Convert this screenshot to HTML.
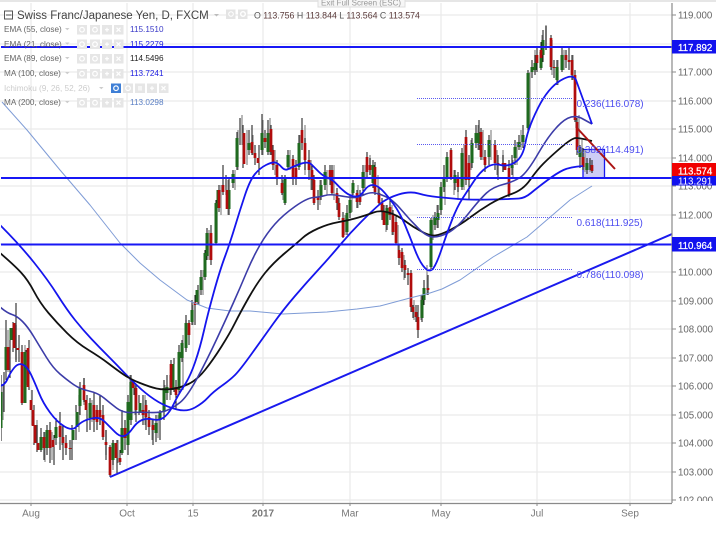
<!DOCTYPE html>
<html><head><meta charset="utf-8"><style>
html,body{margin:0;padding:0;background:#fff;width:725px;height:543px;overflow:hidden}
svg{display:block;font-family:"Liberation Sans",Arial,sans-serif;filter:blur(.3px)}
</style></head><body>
<svg width="725" height="543" viewBox="0 0 725 543">
<defs><clipPath id="c"><rect x="1" y="3" width="671" height="500"/></clipPath>
<clipPath id="a"><rect x="672" y="3" width="46" height="498"/></clipPath></defs>
<rect width="725" height="543" fill="#fff"/>
<rect x="0" y="0" width="716" height="2" fill="#e6e6e6"/>
<path d="M0 15H672M0 44H672M0 72H672M0 101H672M0 129H672M0 158H672M0 186H672M0 215H672M0 244H672M0 272H672M0 301H672M0 329H672M0 358H672M0 386H672M0 415H672M0 443H672M0 472H672M0 500H672M31 3V503M127 3V503M193 3V503M263 3V503M350 3V503M441 3V503M537 3V503M630 3V503" stroke="#eaeaea" stroke-width="1.3" fill="none"/>
<rect x="583" y="149.5" width="21.5" height="28.500" fill="#cdcdf5" stroke="#1a1aee" stroke-width="1.3"/>
<g clip-path="url(#c)">
<path fill="none" stroke="#999" stroke-width="1.4" d="M3 385V420M8 330V372M16 325V360M25 345V395M27 350V385M37 420V450M45 432V462M52 432V460M62 425V445M79 395V432M84 378V405M92 400V422M100 395V425M106 430V455M113 440V470M118 440V463M130 375V420M135 385V415M145 395V425M152 420V440M158 415V438M165 385V410M170 375V400M183 335V390M186 320V350M193 305V325M199 290V305M203 270V295M209 230V260M217 200V240M221 185V215M228 180V215M235 170V190M238 130V170M242 115V145M247 130V165M253 135V155M263 120V155M270 118V155M275 150V175M283 180V200M290 150V170M300 135V165M305 125V175M311 160V190M320 180V205M327 170V195M334 165V200M345 215V235M352 190V212M358 185V208M365 165V190M370 155V175M378 175V195M386 205V232M392 205V235M398 225V250M404 255V280M414 300V320M421 295V320M427 265V295M433 215V240M437 205V228M445 180V205M454 170V195M458 175V200M464 145V190M471 140V170M478 125V150M483 130V160M491 130V160M497 150V175M503 150V172M513 160V178M517 142V165M521 130V150M530 72V128M535 50V72M542 35V60M546 25V50M552 40V75M558 60V85M564 50V70M573 55V80M576 118V128M579 115V155M582 140V165M585 150V172M590 160V172"/>
<path fill="none" stroke="#111" stroke-width="1" d="M1 375V441M4 372V412M6 320V380M10 330V378M13 322V352M16 303V362M19 335V362M22 345V405M26 350V392M29 340V390M32 390V425M34 405V445M37 425V452M41 428V452M44 432V460M47 425V455M50 422V463M54 435V465M56 418V445M60 412V450M63 425V460M66 435V455M70 440V460M72 425V460M76 405V440M80 382V415M84 378V402M87 395V432M90 398V430M94 392V432M97 405V430M100 395V425M103 405V440M106 430V460M110 445V477M113 440V465M117 440V473M120 450V465M122 410V455M125 420V450M128 395V455M131 375V425M134 380V395M136 385V422M139 395V415M143 395V425M146 400V430M149 410V435M153 420V445M156 415V442M160 410V440M164 380V420M167 375V400M171 360V395M174 358V392M176 380V410M179 345V395M182 340V362M186 315V352M189 320V345M192 300V325M195 295V325M198 285V305M201 270V295M205 250V280M207 228V260M211 225V265M216 200V245M219 185V212M223 165V195M226 175V195M229 178V215M233 170V188M237 132V170M240 118V145M243 125V168M249 130V155M252 125V155M255 145V165M259 145V175M262 114V155M265 130V148M268 120V155M271 125V155M273 145V170M277 160V185M282 175V195M285 175V205M288 150V170M293 155V185M296 160V185M299 135V170M302 118V150M305 138V170M309 150V180M312 165V190M314 175V205M318 190V210M321 180V200M325 165V190M330 165V185M332 165V195M337 188V210M339 198V220M343 212V238M347 205V235M350 195V218M353 180V195M357 190V208M360 190V205M363 165V195M367 152V178M370 158V175M373 160V188M375 162V195M379 188V205M382 198V220M384 205V225M387 205V230M390 200V220M393 210V235M396 215V245M399 245V265M402 248V272M405 260V278M408 268V285M411 270V312M413 305V318M416 305V322M418 305V338M422 295V322M424 280V305M428 275V295M431 218V270M435 212V230M438 205V228M441 182V215M444 165V192M447 152V182M451 148V180M455 170V190M458 172V192M462 148V190M466 130V185M469 155V200M472 138V168M476 125V148M479 120V150M481 128V160M485 150V172M489 135V165M495 140V170M498 155V180M503 155V172M509 160V197M512 155V175M515 140V165M519 135V150M523 125V148M528 70V132M532 60V78M535 55V75M537 48V72M541 42V70M543 30V62M546 26V50M551 35V70M554 60V78M557 60V85M562 48V72M566 50V68M569 48V70M572 55V80M575 70V122M577 118V155M580 145V168M583 148V170M587 158V174M590 158V170M592 160V173"/>
<path fill="none" stroke="#1f6a1f" stroke-width="3" d="M1 392V428M6 347V370M11 328V340M25 352V403M41 437V450M47 430V448M56 427V438M73 430V440M77 412V427M80 388V406M90 403V418M113 443V460M122 428V453M128 402V445M131 382V420M140 403V412M156 423V433M160 412V420M164 388V412M167 387V393M173 364V390M179 352V390M182 343V358M186 323V348M192 310V322M197 290V302M201 277V290M205 253V277M207 233V256M216 203V243M218 190V208M229 190V209M233 174V183M237 138V167M249 143V150M262 133V150M268 133V152M285 178V203M288 155V167M299 143V167M321 185V197M325 172V185M347 213V232M350 200V213M353 183V193M363 172V188M373 165V183M387 208V225M422 300V318M424 288V300M431 220V267M435 217V225M438 213V220M441 187V210M444 178V187M447 157V178M455 175V183M462 153V187M472 143V163M476 133V143M479 133V143M489 140V157M512 165V168M515 147V158M519 142V147M523 135V142M528 73V128M532 67V72M535 63V70M541 52V68M543 40V55M557 67V80M562 55V70M580 150V157M587 163V170"/>
<path fill="none" stroke="#b00d0d" stroke-width="2.7" d="M8 347V370M14 323V348M18 348V350M22 352V403M28 348V387M31 400V410M33 410V426M35 425V443M38 443V450M44 437V448M50 430V448M53 440V447M60 426V437M63 437V443M66 443V448M70 448V449M84 385V400M86 400V410M94 405V420M97 410V422M100 410V417M103 415V437M106 442V445M110 447V475M116 443V458M120 458V462M125 428V438M133 382V388M136 388V410M143 410V415M146 405V417M149 417V427M153 425V430M171 364V390M176 387V395M189 323V335M195 302V305M211 233V260M219 190V208M223 185V192M227 190V209M244 133V164M252 142V153M255 153V158M258 158V163M265 138V142M271 129V152M273 150V165M277 165V177M282 183V193M293 159V178M296 168V178M302 130V143M305 143V160M309 160V170M312 170V180M314 180V203M318 197V200M330 170V178M332 170V193M337 193V203M339 203V217M343 218V237M357 193V202M360 197V202M367 157V172M370 165V170M375 167V192M379 193V203M382 203V212M384 212V225M390 207V215M393 215V232M396 222V243M399 250V258M402 252V268M405 265V270M408 273V275M411 273V307M413 307V312M416 312V317M418 317V330M428 288V290M451 150V177M458 178V187M466 137V180M469 163V180M481 132V157M485 157V165M495 145V163M498 163V165M503 163V165M505 163V170M509 168V195M537 55V63M541 50V58M551 38V67M554 67V68M566 55V60M569 60V62M572 60V75M575 75V120M577 122V150M583 157V167M592 165V171"/>
<g fill="none" stroke-linejoin="round">
<path stroke="#7f9cd6" stroke-width="1" d="M2 102L27 130L60 170L90 205L120 243L140 263L160 280L187 300L207 308L230 311L250 311L283 314L327 312L357 309L380 306L410 298L430 293L442 289L460 280L493 257L527 237L570 200L592 186"/>
<path stroke="#1515ee" stroke-width="1.8" d="M0 225Q20 245 34 262.5T57.5 295T75 320T91.5 339T108.5 356.5T125 373.5T141.5 389.5T158.5 402T177 409.5T195 407.5T208 397.5T221.5 386T235 375T251.5 354T273 324T295 296T318.5 269.5T340 245T361.5 221.5T380 204T398.5 194.5T418.5 193.5T437 197T458.5 199T491.500 199.5T519 198.5T531 193T547 180.5T563.5 170T583 166"/>
<path stroke="#111" stroke-width="1.8" d="M0 253Q14 265 21 272.5T34 291.5T48.5 313T67 333T88.5 350T108.5 363.5T123.5 374.5T140 383T156.5 388.5T171.5 389T188.5 384T205 370T221.5 346.5T235 323T248.5 298T265 273T285 253T302.5 238T318 228.5T339 222T358.5 217.5T373.5 212.5T388.5 212.5T405 221T421.5 231.5T435 235.5T450 230T470 217.5T490 204T511.5 194T530 180T543.5 163.5T561 147.5T576 138T592 141"/>
<path stroke="#3c3ca8" stroke-width="1.6" d="M0 307Q7 313 12 314.5T22.5 321.5T34 337T46.5 357.5T60 374T73.5 384.5T89 391T104 398T116.5 408T131.5 412.5T150 412.5T166.5 410.5T180 402.5T197 378.5T217 338.5T233.5 302.5T246.5 272.5T260 245T275 224T295 206.5T313.5 197.5T325 195.5T338.5 195.5T352 197.5T363.5 195T375 193T386.5 197T401.5 210T418.5 228.5T433.5 237T448.5 232.5T468.5 213.5T486.5 193T503 184.5T520 177.5T538.5 153T561 123T582 118.5L592 124"/>
<path stroke="#1515ee" stroke-width="1.8" d="M0 386Q5 385 7.5 379T14 368T22.5 364.5T31 374.5T39 393T50 412.5T64.5 426.5T76 427T84 421T94 418T105 422T115 432T124 436T132.5 428.5T142 420T153.5 419.5T165 416.5T174 403.5T184 386T195 362.5T204 330.5T214 291.5T225 256.5T235 226.5T245 195T255 174T266 165T275 162.5T281.5 167T288.5 169T300 164T311.5 164.5T319 172T328 178T336.5 184T345 192T355 196.5T364 191T372.5 185T382 190T393.5 204T405 225T415 250T425 268T433.5 268T442 248T452 220T462.5 198.5T474 181T486.5 167.5T500.5 165T515.5 162T525.5 142.5T538 108T560.5 80.5T576 80L592 124"/>
<path stroke="#1a1aee" stroke-width="2" d="M110 477L672 234"/>
</g>
<path stroke="#1818f5" stroke-width="2" d="M0 47H672M0 178H672M0 244.5H672" fill="none"/>
<path stroke="#5a5af0" stroke-width="1" stroke-dasharray="1 1" d="M417 98.5H572M417 144.5H572M417 217.5H572M417 269.5H572" fill="none"/>
<path stroke="#ac1414" stroke-width="2" d="M577 128L615 169" fill="none"/>
</g>
<g font-size="10" fill="#4d4df0">
<text x="576.5" y="107">0.236(116.078)</text>
<text x="576.5" y="153">0.382(114.491)</text>
<text x="576.5" y="226">0.618(111.925)</text>
<text x="576.5" y="278">0.786(110.098)</text>
</g>
<path d="M672 3V503M0 503.5H672" stroke="#8a8a8a" stroke-width="1.2" fill="none"/>
<path d="M672 15h4M672 44h4M672 72h4M672 101h4M672 129h4M672 158h4M672 186h4M672 215h4M672 244h4M672 272h4M672 301h4M672 329h4M672 358h4M672 386h4M672 415h4M672 443h4M672 472h4M672 500h4M31 503v3M127 503v3M193 503v3M263 503v3M350 503v3M441 503v3M537 503v3M630 503v3" stroke="#8a8a8a" fill="none"/>
<g font-size="9.7" fill="#666" clip-path="url(#a)">
<text x="678" y="18.5">119.000</text><text x="678" y="75.5">117.000</text><text x="678" y="104.5">116.000</text><text x="678" y="132.5">115.000</text><text x="678" y="161.5">114.000</text><text x="678" y="189.5">113.000</text><text x="678" y="218.5">112.000</text><text x="678" y="275.5">110.000</text><text x="678" y="304.5">109.000</text><text x="678" y="332.5">108.000</text><text x="678" y="361.5">107.000</text><text x="678" y="389.5">106.000</text><text x="678" y="418.5">105.000</text><text x="678" y="446.5">104.000</text><text x="678" y="475.5">103.000</text><text x="678" y="503.5">102.000</text>
</g>
<rect x="672" y="40" width="44" height="13.5" fill="#1212ee"/><text x="678" y="51" font-size="9.7" fill="#fff" stroke="#fff" stroke-width=".25">117.892</text>
<rect x="672" y="173" width="44" height="12.5" fill="#1212ee"/><text x="678" y="184.5" font-size="9.7" fill="#fff">113.291</text>
<rect x="672" y="163" width="44" height="13" fill="#f00000"/><text x="678" y="174.5" font-size="9.7" fill="#fff" stroke="#fff" stroke-width=".25">113.574</text>
<rect x="672" y="237" width="44" height="14.5" fill="#1212ee"/><text x="678" y="249" font-size="9.7" fill="#fff" stroke="#fff" stroke-width=".25">110.964</text>
<g font-size="10" fill="#777" text-anchor="middle">
<text x="31" y="516.5">Aug</text><text x="127" y="516.5">Oct</text><text x="193" y="516.5">15</text><text x="263" y="516.5" font-weight="700">2017</text><text x="350" y="516.5">Mar</text><text x="441" y="516.5">May</text><text x="537" y="516.5">Jul</text><text x="630" y="516.5">Sep</text>
</g>
<rect x="318" y="-2" width="87" height="9" fill="#f6f6f6" stroke="#ddd"/>
<text x="321" y="5.500" font-size="8" fill="#999">Exit Full Screen (ESC)</text>
<rect x="4.5" y="11" width="8" height="8" fill="none" stroke="#555" stroke-width="1"/><path d="M6 15H11.5" stroke="#555"/>
<text x="17" y="19" font-size="11.5" fill="#444">Swiss Franc/Japanese Yen, D, FXCM</text>
<path d="M214 14h5l-2.5 2.5z" fill="#bbb"/>
<g fill="#e4e4e4"><rect x="226" y="9.5" width="9.5" height="9.5"/><rect x="238" y="9.5" width="9.5" height="9.5"/></g>
<circle cx="231" cy="14" r="2.3" fill="none" stroke="#fff"/><circle cx="243" cy="14" r="2.3" fill="none" stroke="#fff" stroke-width="1.4"/>
<text x="254" y="18.5" font-size="8.8" fill="#555">O <tspan fill="#5a3a3a">113.756</tspan> H <tspan fill="#5a3a3a">113.844</tspan> L <tspan fill="#5a3a3a">113.564</tspan> C <tspan fill="#5a3a3a">113.574</tspan></text>
<g font-size="8.2" fill="#666">
<text x="4" y="32">EMA (55, close)</text>
<text x="4" y="47">EMA (21, close)</text>
<text x="4" y="61">EMA (89, close)</text>
<text x="4" y="76">MA (100, close)</text>
<text x="4" y="91" fill="#ccc">Ichimoku (9, 26, 52, 26)</text>
<text x="4" y="105">MA (200, close)</text>
</g>
<path d="M65 28h4.5l-2.2 2.2zM65 42.5h4.500l-2.200 2.200zM65 57h4.500l-2.200 2.200zM65 72h4.500l-2.200 2.200zM65 101h4.500l-2.200 2.200zM99 87h4.500l-2.200 2.200z" fill="#ccc"/>
<g fill="#e6e6e6">
<path d="M77 25h10v9.500h-10zM90 25h10v9.500h-10zM102 25h10v9.500h-10zM114 25h9.500v9.500h-9.500zM77 39.500h10v9.500h-10zM90 39.500h10v9.500h-10zM102 39.500h10v9.500h-10zM114 39.500h9.500v9.500h-9.500zM77 54h10v9.500h-10zM90 54h10v9.500h-10zM102 54h10v9.500h-10zM114 54h9.500v9.500h-9.500zM77 69h10v9.500h-10zM90 69h10v9.500h-10zM102 69h10v9.500h-10zM114 69h9.500v9.500h-9.500zM123 83.500h10v9.500h-10zM135 83.500h10v9.500h-10zM147 83.500h10v9.500h-10zM159 83.500h9.500v9.500h-9.500zM77 98h10v9.500h-10zM90 98h10v9.500h-10zM102 98h10v9.500h-10zM114 98h9.500v9.500h-9.500z"/>
</g>
<rect x="111" y="83.500" width="10" height="9.500" fill="#3f7fd6"/>
<circle cx="116" cy="88.200" r="2.300" fill="none" stroke="#fff" stroke-width="1.200"/>
<g fill="none" stroke="#fff" stroke-width="1.200">
<path d="M105 29.700h4M107 27.700v4M116.500 27.700l4 4m0-4l-4 4M105 44.200h4M107 42.200v4M116.500 42.200l4 4m0-4l-4 4M105 58.700h4M107 56.700v4M116.500 56.700l4 4m0-4l-4 4M105 73.700h4M107 71.700v4M116.500 71.700l4 4m0-4l-4 4M150 88.200h4M152 86.200v4M161.500 86.200l4 4m0-4l-4 4M105 102.700h4M107 100.700v4M116.500 100.700l4 4m0-4l-4 4"/>
<circle cx="82" cy="29.700" r="2.300"/><circle cx="95" cy="29.700" r="2.300"/><circle cx="82" cy="44.200" r="2.300"/><circle cx="95" cy="44.200" r="2.300"/><circle cx="82" cy="58.700" r="2.300"/><circle cx="95" cy="58.700" r="2.300"/><circle cx="82" cy="73.700" r="2.300"/><circle cx="95" cy="73.700" r="2.300"/><circle cx="128" cy="88.200" r="2.300"/><circle cx="82" cy="102.700" r="2.300"/><circle cx="95" cy="102.700" r="2.300"/>
<path d="M139 86v4.500M141 86v4.500"/>
</g>
<g font-size="8.2">
<text x="130" y="32" fill="#3a3ac8">115.1510</text>
<text x="130" y="47" fill="#2020e0">115.2279</text>
<text x="130" y="61" fill="#222">114.5496</text>
<text x="130" y="76" fill="#2020e0">113.7241</text>
<text x="130" y="105" fill="#5a7fc4">113.0298</text>
</g>
</svg>
</body></html>
